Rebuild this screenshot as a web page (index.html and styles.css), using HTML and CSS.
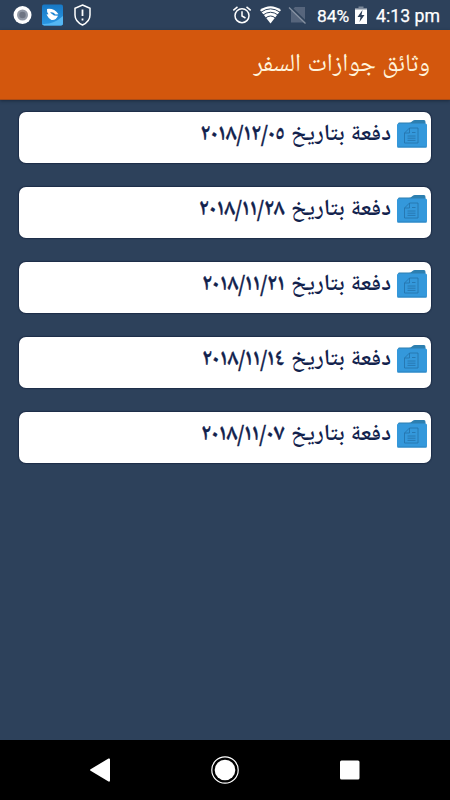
FILE: index.html
```
<!DOCTYPE html>
<html lang="ar" dir="rtl">
<head>
<meta charset="utf-8">
<title>وثائق جوازات السفر</title>
<link rel="stylesheet" href="styles.css">
</head>
<body>
<svg width="0" height="0" class="defs" aria-hidden="true">
  <symbol id="folder" viewBox="0 0 32 30">
    <path d="M2 5 Q2 3.500 3 3.500 H13 Q15 3.500 16.500 2 Q17.500 1 19 1 H28 Q29.500 1 29.500 3 V8 H2Z" fill="#2d7fb0"/>
    <rect x="1" y="4.500" width="30" height="24" rx="1.500" fill="#3498db"/>
    <path d="M1.500 28 H30.500" stroke="#2b83bf"/>
    <path d="M13.500 9 H22 V24 H8.500 V14Z M13.500 9 V14 H8.500 M16 13.500 H19.500 M11.500 17 H19.500 M11.500 19.200 H19.500 M11.500 21.400 H19.500" fill="none" stroke="#2471a8" stroke-width=".8"/>
  </symbol>
</svg>
<header class="status" dir="ltr">
  <svg class="status-left" width="100" height="30" viewBox="0 0 100 30">
    <defs><linearGradient id="blue" x2="0" y2="1"><stop stop-color="#1778c5"/><stop offset="1" stop-color="#2b98e4"/></linearGradient></defs>
    <circle cx="22.500" cy="15" r="9" fill="#fff"/><circle cx="22.500" cy="15" r="5.500" fill="#9299a6"/><circle cx="22.500" cy="15" r="3.200" fill="#6e7583"/>
    <rect x="42" y="4.500" width="21" height="21" rx="2" fill="url(#blue)"/>
    <path d="M42 24 Q53 25 63 16 V23.500 Q63 25.500 61 25.500 H44Z" fill="#55b7f3"/>
    <path d="M47 9 Q54 8 58.500 14.200 L55.500 14.500 Q53 11.500 50 12.500 L54 15.500 L58 15.800 Q56 20.500 51.500 20 Q48 18 46.500 14.500 L48.500 14.300 Q46.500 11.500 47 9Z" fill="#fff"/>
    <path d="M82.500 5 L90 8.200 V15 Q90 21.500 82.500 25 Q75 21.500 75 15 V8.200Z" fill="none" stroke="#fff" stroke-width="1.500"/>
    <path d="M82.500 9.500 V16 M82.500 18.500 V20.500" stroke="#fff" stroke-width="1.800"/>
  </svg>
  <div class="status-right">
    <svg width="78" height="30" viewBox="0 0 78 30">
      <g fill="none" stroke="#fff" stroke-width="1.500"><circle cx="10" cy="15.700" r="7"/><path d="M10 11.300 V16 L13.500 18 M1.300 10.300 L5.500 6.800 M18.700 10.300 L14.500 6.800"/></g>
      <path d="M28 10 Q38.500 2.500 49 10 L38.500 23.500Z" fill="#fff"/>
      <path d="M29 12.200 Q38.500 5.500 48 12.200 M31 15 Q38.500 9.500 46 15 M33.500 18 Q38.500 14 43.500 18" fill="none" stroke="#2e425b" stroke-width="1"/>
      <path d="M63 7 H73 V22.500 H59 V11Z" fill="#56657c"/><path d="M58.500 7 L75 23" stroke="#2e425b" stroke-width="1.800"/><path d="M57 7.500 L73.500 23.500" stroke="#8792a2" stroke-width="1.300"/>
    </svg>
    <span class="percent">84%</span>
    <svg class="battery" width="12" height="30" viewBox="0 0 12 30"><path d="M3.500 6.500 H8.500 V8 H12 V11 H0 V8 H3.500Z" fill="#7d899a"/><path d="M0 9.500 H12 V24 H0Z" fill="#fff"/><path d="M7.500 10 L2.500 17 H5.500 L4.500 22 L9.500 15 H6.500Z" fill="#2c3f59"/></svg>
    <span class="clock">4:13 pm</span>
  </div>
</header>
<div class="appbar"><h1>وثائق جوازات السفر</h1></div>
<main>
  <div class="card"><svg width="32" height="30"><use href="#folder"/></svg><p>دفعة بتاريخ <span>٢٠١٨/١٢/٠٥</span></p></div>
  <div class="card"><svg width="32" height="30"><use href="#folder"/></svg><p>دفعة بتاريخ <span>٢٠١٨/١١/٢٨</span></p></div>
  <div class="card"><svg width="32" height="30"><use href="#folder"/></svg><p>دفعة بتاريخ <span>٢٠١٨/١١/٢١</span></p></div>
  <div class="card"><svg width="32" height="30"><use href="#folder"/></svg><p>دفعة بتاريخ <span>٢٠١٨/١١/١٤</span></p></div>
  <div class="card"><svg width="32" height="30"><use href="#folder"/></svg><p>دفعة بتاريخ <span>٢٠١٨/١١/٠٧</span></p></div>
</main>
<nav dir="ltr">
  <svg width="450" height="60" viewBox="0 0 450 60" fill="#fff"><path d="M91 29 L108.500 18.500 Q110 18 110 19.500 V40.500 Q110 42 108.500 41.500 L91 31 Q89 30 91 29Z"/><circle cx="225" cy="30" r="10.300"/><circle cx="225" cy="30" r="13.200" fill="none" stroke="#fff" stroke-width="1.200"/><rect x="340" y="20.500" width="19.500" height="19" rx="1.500"/></svg>
</nav>
</body>
</html>
```
FILE: styles.css
```
* { box-sizing: border-box; }
body { margin: 0; width: 450px; height: 800px; display: flex; flex-direction: column; background: #2d415b; font-family: "Noto Naskh Arabic UI", "Noto Naskh Arabic", "DejaVu Sans", sans-serif; overflow: hidden; }
svg { display: block; flex: none; }
.defs { position: absolute; }
.status { height: 30px; display: flex; justify-content: space-between; color: #fff; font: 400 17.7px/32px Roboto, sans-serif; -webkit-text-stroke: .25px #fff; }
.status-right { display: flex; width: 218px; white-space: nowrap; }
.percent { width: 38px; margin-left: 7px; font-size: 17.4px; }
.clock { margin-left: 9px; }
.appbar { height: 70px; padding: 0 20px; background: #d3570d; border-bottom: 1px solid #ac4b14; box-shadow: 0 1px 3px #1b2a3f; display: flex; align-items: center; }
h1 { margin: 0; font-size: 25px; font-weight: 400; line-height: 66px; height: 68px; color: #fff3da; white-space: nowrap; word-spacing: .8px; }
main { flex: 1; padding: 12px 19px 0; display: flex; flex-direction: column; gap: 24px; }
.card { height: 51px; padding: 7px 3px 0; display: flex; background: #fff; border-radius: 7px; box-shadow: 0 0 1px 1px #1d2d48; color: #12224d; font-size: 23px; font-weight: 600; line-height: 30px; white-space: nowrap; }
.card p { margin: 0 5px 0 0; word-spacing: .2px; }
.card span { letter-spacing: .35px; margin-right: 1px; -webkit-text-stroke: .3px #12224d; }
nav { height: 60px; background: #000; }
```
